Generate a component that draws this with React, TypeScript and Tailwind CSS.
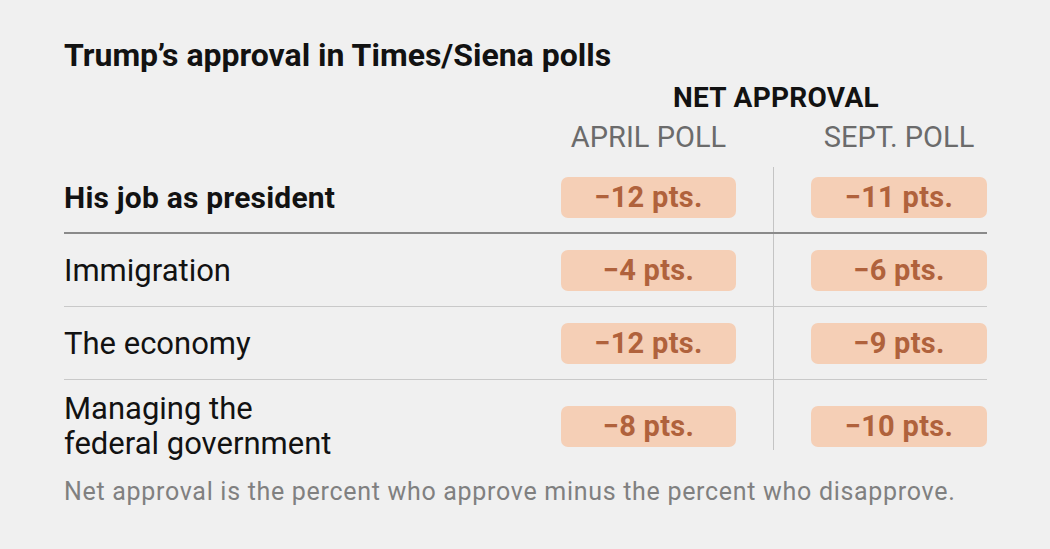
import React from 'react';

type Row = {
  label: string[];
  april: string;
  sept: string;
  bold?: boolean;
  rowCls: string;
  cellCls: string;
  lineCls: string;
};

const rows: Row[] = [
  {
    label: ['His job as president'],
    april: '−12 pts.',
    sept: '−11 pts.',
    bold: true,
    rowCls: 'h-[67px] border-b-2 border-[#8a8a8a]',
    cellCls: 'pb-[5px]',
    lineCls: 'self-stretch',
  },
  {
    label: ['Immigration'],
    april: '−4 pts.',
    sept: '−6 pts.',
    rowCls: 'h-[73px] border-b border-[#c9c9c9]',
    cellCls: '',
    lineCls: 'self-stretch',
  },
  {
    label: ['The economy'],
    april: '−12 pts.',
    sept: '−9 pts.',
    rowCls: 'h-[73px] border-b border-[#c9c9c9]',
    cellCls: '',
    lineCls: 'self-stretch',
  },
  {
    label: ['Managing the', 'federal government'],
    april: '−8 pts.',
    sept: '−10 pts.',
    rowCls: 'h-[81px]',
    cellCls: 'pt-[11px]',
    lineCls: 'self-start h-[70px]',
  },
];

function Badge({ value, width }: { value: string; width: string }) {
  return (
    <div className={`${width} flex items-center`}>
      <div className="w-full h-[41px] rounded-[7px] bg-[#f5cfb6] flex items-center justify-center text-[29px] tracking-[0.3px] font-bold text-[#b0623c] leading-none">
        {value}
      </div>
    </div>
  );
}

export default function App() {
  return (
    <div className="min-h-screen w-full bg-[#f0f0f0] font-[Roboto,sans-serif] text-[#121212]">
      <div className="w-[987px] pl-[64px] pt-[36px]">
        {/* Title */}
        <h1 className="text-[32px] leading-[38px] font-bold">
          Trump’s approval in Times/Siena polls
        </h1>

        {/* Column headers */}
        <div className="flex mt-[8px]">
          <div className="flex-1" />
          <div className="w-[426px] pl-[4px] text-center text-[28px] tracking-[0.3px] leading-[32px] font-bold">
            NET APPROVAL
          </div>
        </div>
        <div className="flex mt-[7px] text-[29px] leading-[32px] text-[#6b6b6b]">
          <div className="flex-1" />
          <div className="w-[175px] text-center">APRIL POLL</div>
          <div className="w-[75px]" />
          <div className="w-[176px] text-center">SEPT. POLL</div>
        </div>

        {/* Rows */}
        <div className="mt-[14px]">
          {rows.map((r) => (
            <div key={r.label.join(' ')} className={`flex ${r.rowCls}`}>
              <div className={`flex-1 flex items-center ${r.cellCls}`}>
                <div
                  className={`leading-[35px] ${
                    r.bold ? 'font-bold text-[30px] tracking-[0.2px]' : 'text-[31px]'
                  }`}
                >
                  {r.label.map((l) => (
                    <div key={l}>{l}</div>
                  ))}
                </div>
              </div>
              <div className={`flex ${r.cellCls}`}>
                <Badge value={r.april} width="w-[175px]" />
              </div>
              <div className="w-[75px] flex justify-center">
                <div className={`w-px bg-[#c4c4c4] ${r.lineCls}`} />
              </div>
              <div className={`flex ${r.cellCls}`}>
                <Badge value={r.sept} width="w-[176px]" />
              </div>
            </div>
          ))}
        </div>

        {/* Footnote */}
        <p className="mt-[16px] text-[25px] tracking-[0.7px] leading-[30px] text-[#808080]">
          Net approval is the percent who approve minus the percent who disapprove.
        </p>
      </div>
    </div>
  );
}
